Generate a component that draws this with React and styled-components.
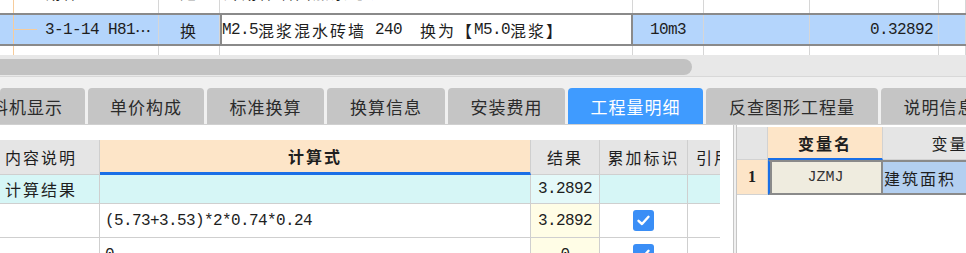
import React from 'react';
import styled, { createGlobalStyle } from 'styled-components';

const C = {
  grid: '#d6d6d6',
  thick: '#8a8a8a',
  sel: '#b4d5fc',
  orange: '#f6cc9c',
  peach: '#fde5c8',
  hdr: '#e5e5e5',
  cyan: '#d6f6f6',
  blue: '#1b6fe6',
};

const GlobalStyle = createGlobalStyle`
  html, body { margin: 0; padding: 0; background: #fff; overflow: hidden; }
  #root { width: 966px; height: 253px; }
`;

const Page = styled.div`
  width: 966px;
  height: 253px;
  overflow: hidden;
  display: flex;
  flex-direction: column;
  background: #fff;
  color: #1e1e1e;
  font-family: "Noto Sans CJK SC", sans-serif;
`;

const Run = styled.span`
  font-family: ${p => (p.$cjk ? '"Noto Sans CJK SC", sans-serif' : '"Liberation Mono", monospace')};
  font-size: 16px;
  font-weight: ${p => (p.$bold ? 700 : 400)};
  letter-spacing: ${p => (p.$cjk ? '2px' : '-0.6px')};
  line-height: 20px;
  white-space: pre;
`;

const isCjk = ch => /[\u2026\u3000-\u9fff\uff00-\uffef]/.test(ch);

function Mixed({ text, bold }) {
  const runs = [];
  for (const ch of text) {
    const c = isCjk(ch);
    const last = runs[runs.length - 1];
    if (last && last.c === c) last.t += ch;
    else runs.push({ c, t: ch });
  }
  return runs.map((r, i) => (
    <Run key={i} $cjk={r.c} $bold={bold}>
      {r.t}
    </Run>
  ));
}

/* ---------- top grid ---------- */
const TopGrid = styled.div`
  height: 55px;
  flex: none;
  display: flex;
  flex-direction: column;
  overflow: hidden;
`;

const TOP_COLS = '159px 61px 413px 71px 106px 129px 1fr';

const TopRow = styled.div`
  display: grid;
  grid-template-columns: ${TOP_COLS};
  box-sizing: border-box;
  flex: ${p => (p.$fill ? '1' : 'none')};
  height: ${p => (p.$h ? `${p.$h}px` : 'auto')};
  ${p => p.$selected && `background:${C.sel}; border-top:2px solid ${C.thick}; border-bottom:2px solid ${C.thick};`}
`;

const TopCell = styled.div`
  display: flex;
  align-items: ${p => (p.$bottom ? 'flex-end' : 'center')};
  justify-content: ${p => p.$align || 'flex-start'};
  overflow: hidden;
  white-space: nowrap;
  box-sizing: border-box;
  line-height: 20px;
  border-right: 1px solid ${C.grid};
  padding: 0 ${p => p.$pr || 0}px ${p => (p.$bottom ? 11 : 0)}px ${p => p.$pl || 0}px;
  ${p => p.$edit && `background:#fff; border-left:2px solid ${C.thick}; border-right:2px solid ${C.thick};`}
`;

const TreeCell = styled(TopCell)`
  background-image: linear-gradient(${C.orange}, ${C.orange});
  background-size: 1px 100%;
  background-repeat: no-repeat;
  background-position: 13px 0;
`;

const Branch = styled.span`
  flex: none;
  width: 24px;
  height: 1px;
  background: ${C.orange};
  margin: 0 8px 0 13px;
`;

/* ---------- scrollbar ---------- */
const HScroll = styled.div`
  flex: none;
  height: 22px;
  box-sizing: border-box;
  background: #e8e8e8;
  border-bottom: 1px solid #d8d8d8;
  padding-top: 4px;
`;

const Thumb = styled.div`
  width: 692px;
  height: 16px;
  border-radius: 0 8px 8px 0;
  background: #c2c2c2;
`;

/* ---------- tabs ---------- */
const TabStrip = styled.div`
  flex: none;
  height: 47px;
  box-sizing: border-box;
  background: #f0f0f0;
  display: flex;
  align-items: flex-end;
  gap: 3px;
  overflow: hidden;
`;

const Tab = styled.div`
  flex: none;
  width: ${p => p.$w}px;
  height: 36px;
  box-sizing: border-box;
  display: flex;
  align-items: center;
  justify-content: ${p => (p.$clip ? 'flex-end' : 'center')};
  padding-right: ${p => (p.$clip ? 22 : 0)}px;
  overflow: hidden;
  white-space: nowrap;
  border-radius: 4px 4px 0 0;
  background: ${p => (p.$active ? '#3f9bff' : '#c5c5c5')};
  color: ${p => (p.$active ? '#fff' : '#2b2b2b')};
  font-size: 17px;
  letter-spacing: 1px;
`;

/* ---------- bottom ---------- */
const Bottom = styled.div`
  flex: 1;
  min-height: 0;
  display: flex;
  border-top: 1px solid #d0d0d0;
`;

const LeftPane = styled.div`
  width: 733px;
  flex: none;
  box-sizing: border-box;
  padding-top: 15px;
  overflow: hidden;
  background: #fff;
`;

const CalcGrid = styled.div`
  width: 720px;
  overflow: hidden;
`;

const CALC_COLS = '100px 431px 69px 88px 80px';

const CalcRow = styled.div`
  display: grid;
  grid-template-columns: ${CALC_COLS};
  width: 768px;
  height: ${p => p.$h}px;
  background: ${p => p.$bg || '#fff'};
`;

const CalcCell = styled.div`
  display: flex;
  align-items: center;
  justify-content: ${p => p.$align || 'flex-start'};
  box-sizing: border-box;
  overflow: hidden;
  white-space: nowrap;
  padding-left: ${p => p.$pl || 0}px;
  border-right: 1px solid #cfcfcf;
  border-bottom: ${p => (p.$underline ? `3px solid ${C.blue}` : '1px solid #cfcfcf')};
  background: ${p => p.$bg || 'transparent'};
`;

const Check = styled.span`
  width: 21px;
  height: 21px;
  border-radius: 3px;
  background: #3a8ef6;
  display: flex;
  align-items: center;
  justify-content: center;
`;

const Splitter = styled.div`
  width: 4px;
  flex: none;
  box-sizing: border-box;
  background: #f0f0f0;
  border-left: 1px solid #c6c6c6;
  border-right: 1px solid #c6c6c6;
`;

const RightPane = styled.div`
  flex: 1;
  min-width: 0;
  padding-top: 2px;
  overflow: hidden;
  background: #fff;
`;

const VAR_COLS = '31px 115px 170px';

const VarRow = styled.div`
  display: grid;
  grid-template-columns: ${VAR_COLS};
  width: 316px;
  height: ${p => p.$h}px;
`;

const VarCell = styled.div`
  display: flex;
  align-items: center;
  justify-content: ${p => p.$align || 'center'};
  box-sizing: border-box;
  overflow: hidden;
  white-space: nowrap;
  padding-left: ${p => p.$pl || 0}px;
  background: ${p => p.$bg};
  border-right: 1px solid #d2d2d2;
  border-bottom: ${p => (p.$underline ? `2px solid ${C.blue}` : '1px solid #d2d2d2')};
`;

const NameCell = styled(VarCell)`
  border: 2px solid ${C.thick};
  border-left: 2px solid ${C.blue};
  box-shadow: inset 2px 0 0 ${C.thick};
  font-family: "Liberation Mono", monospace;
  font-size: 15px;
  color: #333;
`;

const DescCell = styled(VarCell)`
  border-top: 2px solid ${C.thick};
  border-bottom: 2px solid ${C.thick};
  border-right: none;
`;

const RowNum = styled.span`
  font-family: "Liberation Serif", serif;
  font-weight: 700;
  font-size: 16px;
`;

const CheckMark = () => (
  <Check>
    <svg width="15" height="15" viewBox="0 0 15 15">
      <polyline points="2.5,7.8 6,11 12.5,3.8" fill="none" stroke="#fff" strokeWidth="2.4" strokeLinecap="round" strokeLinejoin="round" />
    </svg>
  </Check>
);

const tabs = [
  { t: '工料机显示', w: 85, clip: true },
  { t: '单价构成', w: 116 },
  { t: '标准换算', w: 117 },
  { t: '换算信息', w: 118 },
  { t: '安装费用', w: 117 },
  { t: '工程量明细', w: 135, active: true },
  { t: '反查图形工程量', w: 172 },
  { t: '说明信息', w: 117 },
];

export default function App() {
  return (
    <Page>
      <GlobalStyle />
      <TopGrid>
        <TopRow $h={13}>
          <TreeCell $bottom $pl={45}><Mixed text="砌体" /></TreeCell>
          <TopCell $bottom $align="center"><Mixed text="定" /></TopCell>
          <TopCell $bottom $pl={3}><Mixed text="砖砌体墙面加浆勾缝" /></TopCell>
          <TopCell $bottom />
          <TopCell $bottom />
          <TopCell $bottom />
          <TopCell $bottom />
        </TopRow>
        <TopRow $h={33} $selected>
          <TreeCell><Branch /><Mixed text="3-1-14 H81…" /></TreeCell>
          <TopCell $align="center"><Mixed text="换" /></TopCell>
          <TopCell $edit><Mixed text="M2.5混浆混水砖墙 240  换为【M5.0混浆】" /></TopCell>
          <TopCell $align="center"><Mixed text="10m3" /></TopCell>
          <TopCell />
          <TopCell $align="flex-end" $pr={5}><Mixed text="0.32892" /></TopCell>
          <TopCell />
        </TopRow>
        <TopRow $fill>
          <TreeCell />
          <TopCell />
          <TopCell />
          <TopCell />
          <TopCell />
          <TopCell />
          <TopCell />
        </TopRow>
      </TopGrid>

      <HScroll>
        <Thumb />
      </HScroll>

      <TabStrip>
        {tabs.map(tb => (
          <Tab key={tb.t} $w={tb.w} $clip={tb.clip} $active={tb.active}>
            {tb.t}
          </Tab>
        ))}
      </TabStrip>

      <Bottom>
        <LeftPane>
          <CalcGrid>
            <CalcRow $h={35}>
              <CalcCell $pl={5} $bg={C.hdr}><Mixed text="内容说明" /></CalcCell>
              <CalcCell $align="center" $bg={C.peach} $underline><Mixed text="计算式" bold /></CalcCell>
              <CalcCell $align="center" $bg={C.hdr}><Mixed text="结果" /></CalcCell>
              <CalcCell $align="center" $bg={C.hdr}><Mixed text="累加标识" /></CalcCell>
              <CalcCell $pl={8} $bg={C.hdr}><Mixed text="引用代码" /></CalcCell>
            </CalcRow>
            <CalcRow $h={29} $bg={C.cyan}>
              <CalcCell $pl={5}><Mixed text="计算结果" /></CalcCell>
              <CalcCell />
              <CalcCell $align="center" $bg="#e4f9f9"><Mixed text="3.2892" /></CalcCell>
              <CalcCell />
              <CalcCell />
            </CalcRow>
            <CalcRow $h={34}>
              <CalcCell />
              <CalcCell $pl={5}><Mixed text="(5.73+3.53)*2*0.74*0.24" /></CalcCell>
              <CalcCell $align="center" $bg="#fffde6"><Mixed text="3.2892" /></CalcCell>
              <CalcCell $align="center"><CheckMark /></CalcCell>
              <CalcCell />
            </CalcRow>
            <CalcRow $h={34}>
              <CalcCell />
              <CalcCell $pl={5}><Mixed text="0" /></CalcCell>
              <CalcCell $align="center" $bg="#fffde6"><Mixed text="0" /></CalcCell>
              <CalcCell $align="center"><CheckMark /></CalcCell>
              <CalcCell />
            </CalcRow>
          </CalcGrid>
        </LeftPane>
        <Splitter />
        <RightPane>
          <VarRow $h={33}>
            <VarCell $bg={C.hdr} />
            <VarCell $bg={C.peach} $underline><Mixed text="变量名" bold /></VarCell>
            <VarCell $bg={C.hdr}><Mixed text="变量描述" /></VarCell>
          </VarRow>
          <VarRow $h={35}>
            <VarCell $bg={C.peach}><RowNum>1</RowNum></VarCell>
            <NameCell $bg="#efecdf">JZMJ</NameCell>
            <DescCell $bg="#b3cff0" $align="flex-start" $pl={1}><Mixed text="建筑面积" /></DescCell>
          </VarRow>
        </RightPane>
      </Bottom>
    </Page>
  );
}
